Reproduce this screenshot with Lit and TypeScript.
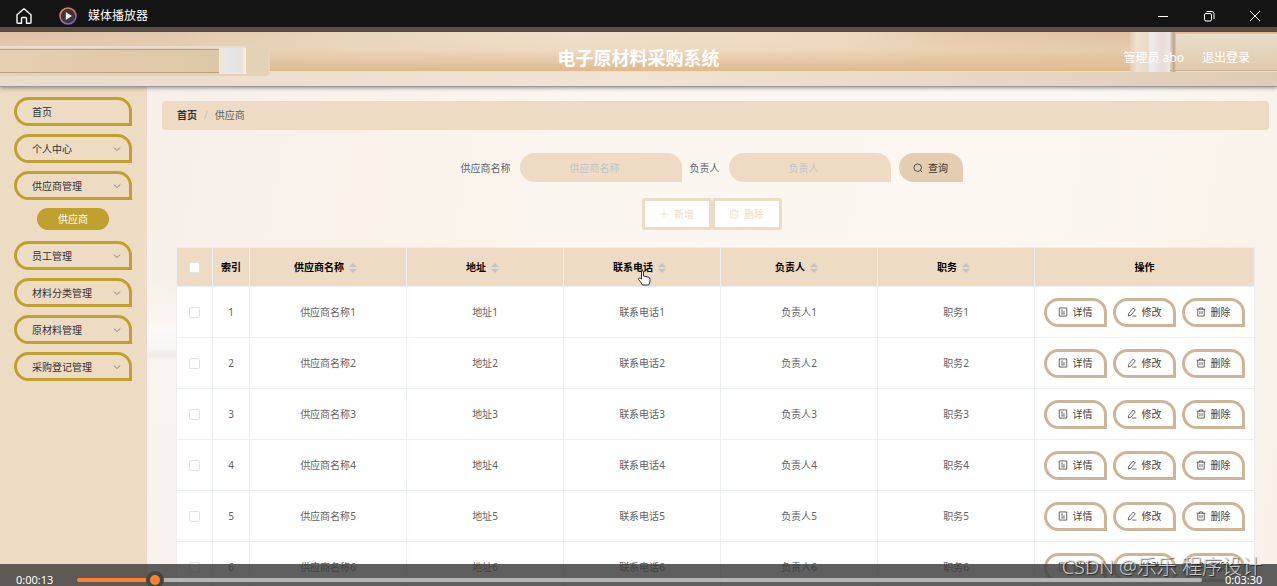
import { LitElement, html, css, svg } from "lit";
import { customElement, state } from "lit/decorators.js";

const glyph = (body: unknown, cls = "ic") =>
  html`<svg class=${cls} viewBox="0 0 16 16" fill="none" stroke="currentColor" aria-hidden="true">${body}</svg>`;

const icons = {
  chevron: svg`<path d="M1.500 5l6.500 6 6.500-6"/>`,
  search: svg`<circle cx="7.5" cy="7.5" r="6"/><path d="M12 12l2.6 2.6"/>`,
  plus: svg`<path d="M8 1v14M1 8h14"/>`,
  trash: svg`<path d="M1 3.5h14M5.5 3.5v-2h5v2M2.8 3.5v11h10.4v-11M6.3 6.5v5M9.7 6.5v5"/>`,
  detail: svg`<path d="M2 1.5h12v13H2zM5 5h3M5 8h6M5 11h6"/>`,
  edit: svg`<path d="M2.5 10.5L9.7 1.8l3.6 2.6-7.2 8.8-4 1.2zM8.5 14.5h6.5"/>`,
};

@customElement("page-banner")
class PageBanner extends LitElement {
  static styles = css`
    :host {
      display: grid;
      align-items: center;
      grid-template-columns: 1fr auto 1fr;
      position: relative;
      height: 54px;
      color: #fff;
      border-bottom: 1px solid #999;
      box-shadow: 0 1px 4px rgba(0, 0, 0, 0.4);
      z-index: 1;
    }
    .art {
      position: absolute;
      inset: 0;
      width: 100%;
      height: 100%;
    }
    .title {
      grid-column: 2;
      position: relative;
      margin: 0;
      padding-bottom: 3px;
      font-size: 18px;
      line-height: 24px;
      font-weight: 700;
    }
    .user {
      position: relative;
      justify-self: end;
      display: flex;
      gap: 18px;
      padding: 0 27px 2px 0;
      font-size: 12px;
      line-height: 20px;
    }
    .user a {
      color: inherit;
      text-decoration: none;
    }
  `;
  render() {
    return html`
      <svg class="art" viewBox="0 0 1277 54" preserveAspectRatio="none" aria-hidden="true">
        <defs>
          <linearGradient id="wood" x1="0" x2="1" y1="0" y2="0">
            <stop offset="0" stop-color="#dfc0a2" />
            <stop offset=".13" stop-color="#e2c8ac" />
            <stop offset=".27" stop-color="#e8d6b9" />
            <stop offset=".45" stop-color="#f1dfcd" />
            <stop offset=".66" stop-color="#ecdabc" />
            <stop offset=".76" stop-color="#e6c9ac" />
            <stop offset="1" stop-color="#d9b895" />
          </linearGradient>
          <linearGradient id="glow" x1="0" x2="0" y1="0" y2="1">
            <stop offset="0" stop-color="#eed9bd" stop-opacity="0" />
            <stop offset=".45" stop-color="#ecd5b8" stop-opacity=".5" />
            <stop offset=".65" stop-color="#e6c6a4" stop-opacity=".7" />
            <stop offset=".85" stop-color="#e2bf96" stop-opacity=".9" />
            <stop offset="1" stop-color="#dfbb8a" />
          </linearGradient>
          <linearGradient id="edge" x1="0" x2="1" y1="0" y2="0">
            <stop offset="0" stop-color="#e9dccb" />
            <stop offset=".5" stop-color="#f1e4d4" />
            <stop offset="1" stop-color="#dfccb4" />
          </linearGradient>
          <linearGradient id="bar" x1="0" x2="1" y1="0" y2="0">
            <stop offset="0" stop-color="#e7cfb3" />
            <stop offset=".5" stop-color="#e2c9ab" />
            <stop offset="1" stop-color="#dcc8a6" />
          </linearGradient>
          <linearGradient id="metal" x1="0" x2="1" y1="0" y2="0">
            <stop offset="0" stop-color="#f0e6da" />
            <stop offset=".4" stop-color="#e7e6e6" />
            <stop offset=".85" stop-color="#e9e3dd" />
            <stop offset="1" stop-color="#faf4ea" />
          </linearGradient>
          <linearGradient id="clasp" x1="0" x2="1" y1="0" y2="0">
            <stop offset="0" stop-color="#e4cdb2" />
            <stop offset=".15" stop-color="#eee2d2" />
            <stop offset=".38" stop-color="#e8dac6" />
            <stop offset=".45" stop-color="#efecec" />
            <stop offset=".7" stop-color="#e6dbda" />
            <stop offset=".85" stop-color="#efe8e4" />
            <stop offset=".95" stop-color="#b9a78c" />
            <stop offset="1" stop-color="#dccbb0" />
          </linearGradient>
          <linearGradient id="panel" x1="0" x2="0" y1="0" y2="1">
            <stop offset="0" stop-color="#e9dfcd" />
            <stop offset="1" stop-color="#e0c9a9" />
          </linearGradient>
        </defs>
        <rect width="1277" height="54" fill="url(#wood)" />
        <rect width="1277" height="39" fill="url(#glow)" />
        <rect y="39" width="1277" height="15" fill="url(#edge)" />
        <rect y="39" width="1277" height="1" fill="#f4dcc0" />
        <rect y="14" width="270" height="29" fill="#e6d3bb" />
        <rect y="14" width="245" height="2" fill="#ecdccb" />
        <rect y="17" width="219" height="24" fill="url(#bar)" />
        <path d="M0 17.500H219M0 40.500H219" stroke="#b9a184" />
        <rect x="219" y="16" width="27" height="26" fill="url(#metal)" />
        <rect x="246" y="15" width="22" height="25" fill="#e3d3b4" />
        <rect y="42" width="268" height="2" fill="#e7d2b5" />
        <rect x="1130" width="46" height="40" fill="url(#clasp)" />
        <rect x="1176" y="1" width="101" height="38" fill="url(#panel)" />
        <path d="M1170 38.500H1277" stroke="#c4b193" />
        <path d="M1176 1.500H1277" stroke="#d6c6ab" />
      </svg>
      <h1 class="title">电子原材料采购系统</h1>
      <div class="user"><span>管理员 abo</span><a href="#logout">退出登录</a></div>
    `;
  }
}

@customElement("side-menu")
class SideMenu extends LitElement {
  static styles = css`
    :host {
      display: block;
      width: 147px;
      box-sizing: border-box;
      padding: 10px 15px 0 14px;
      background: #eddcc3;
    }
    nav {
      display: flex;
      flex-direction: column;
      gap: 8px;
    }
    .item {
      display: flex;
      justify-content: space-between;
      align-items: center;
      box-sizing: border-box;
      height: 29px;
      padding: 0 8px 0 15px;
      border: 3px solid #c0a02f;
      border-radius: 15px 15px 0 15px;
      color: #303133;
      font-size: 10px;
      line-height: 16px;
      text-decoration: none;
    }
    .arrow {
      width: 8px;
      height: 8px;
      color: #8d8470;
      stroke-width: 2;
    }
    .sub {
      align-self: center;
      width: 72px;
      margin-bottom: 3px;
      border-radius: 11px;
      background: #c0a02f;
      color: #fff;
      text-align: center;
      text-decoration: none;
      font-size: 10px;
      line-height: 22px;
    }
  `;
  private items = ["首页", "个人中心", "供应商管理", "员工管理", "材料分类管理", "原材料管理", "采购登记管理"];
  render() {
    return html`<nav>
      ${this.items.map(
        (name, i) => html`
          <a class="item" href="#menu-${i}">${name}${i ? glyph(icons.chevron, "arrow") : null}</a>
          ${name === "供应商管理" ? html`<a class="sub" href="#supplier">供应商</a>` : null}
        `
      )}
    </nav>`;
  }
}

@customElement("supplier-page")
class SupplierPage extends LitElement {
  static styles = css`
    :host {
      display: block;
      min-width: 0;
      padding: 14px 8px 0 15px;
      font-size: 10px;
      line-height: 16px;
      color: #606266;
      background: linear-gradient(
          180deg,
          rgba(250, 247, 242, 0) 38%,
          rgba(250, 247, 242, 0.8) 46%,
          #fcfaf8 48%,
          #f7f5f2 52%,
          #eeeae3 53%,
          #f8f4ef 54%,
          rgba(248, 244, 239, 0.6) 100%
        )
        left / 60px 100% no-repeat,
        linear-gradient(100deg, #f7f0ea 0, #f9f1ea 18%, #fbf7f0 40%, #fcf8f1 75%, #f8f0e9 100%);
    }
    button,
    input {
      font: inherit;
      box-sizing: border-box;
      margin: 0;
    }
    button {
      display: flex;
      align-items: center;
      justify-content: center;
      gap: 5px;
      padding: 0;
      white-space: nowrap;
    }
    .ic {
      width: 10px;
      height: 10px;
      stroke-width: 1.3;
    }
    .crumbs {
      display: flex;
      gap: 7px;
      padding: 6px 15px 7px;
      border-radius: 4px;
      background: #eddcc3;
    }
    .crumbs a {
      color: #303133;
      font-weight: 700;
      text-decoration: none;
    }
    .slash {
      color: #c0c4cc;
    }
    .search {
      display: flex;
      justify-content: center;
      align-items: center;
      gap: 8px;
      padding: 23px 8px 16px 0;
    }
    .field {
      display: flex;
      align-items: center;
      gap: 9px;
    }
    .field input {
      width: 162px;
      height: 29px;
      padding: 0 12px 0 0;
      border: 0;
      border-radius: 15px 15px 0 15px;
      background: #eddcc3;
      text-align: center;
    }
    .field input::placeholder {
      color: #c0c4cc;
      opacity: 1;
    }
    .query {
      width: 64px;
      height: 29px;
      border: 0;
      border-radius: 15px 15px 0 15px;
      background: #e3ceb2;
      color: #303133;
    }
    .tools {
      display: flex;
      justify-content: center;
      padding: 0 8px 17px 0;
    }
    .tools button {
      width: 70px;
      height: 32px;
      border: 3px solid #eddcc3;
      border-radius: 3px;
      background: #fff;
      color: #eddcc3;
    }
    .wrap {
      padding: 0 14px;
    }
    table {
      width: 100%;
      table-layout: fixed;
      border-collapse: collapse;
      background: #fff;
    }
    .c-check {
      width: 36px;
    }
    .c-index {
      width: 37px;
    }
    .c-ops {
      width: 220px;
    }
    th,
    td {
      padding: 0;
      border: 1px solid #ebeef5;
      text-align: center;
      vertical-align: middle;
      font-weight: 400;
    }
    th {
      height: 38px;
      background: #eddcc3;
      color: #000;
      font-weight: 700;
    }
    td {
      height: 50px;
    }
    .sort {
      display: inline-flex;
      justify-content: center;
      width: 18px;
      vertical-align: middle;
    }
    .sort svg {
      width: 8px;
      height: 10px;
      fill: #c0c4cc;
    }
    .box {
      appearance: none;
      display: block;
      width: 11px;
      height: 11px;
      margin: 0 auto;
      border: 1px solid #dfe2e8;
      border-radius: 2px;
      background: #fff;
    }
    .ops {
      display: flex;
      justify-content: center;
      gap: 6px;
      padding-right: 1px;
    }
    .ops button {
      width: 63px;
      height: 29px;
      border: 3px solid #ccb697;
      border-radius: 15px 15px 0 15px;
      background: #fff;
      color: #444;
    }
  `;
  private columns = ["供应商名称", "地址", "联系电话", "负责人", "职务"];
  private rows = [1, 2, 3, 4, 5, 6];
  render() {
    return html`
      <div class="crumbs">
        <a href="#home">首页</a><span class="slash">/</span><span>供应商</span>
      </div>
      <form class="search">
        <div class="field">
          <label for="name">供应商名称</label><input id="name" type="text" placeholder="供应商名称" />
        </div>
        <div class="field">
          <label for="owner">负责人</label><input id="owner" type="text" placeholder="负责人" />
        </div>
        <button class="query" type="button">${glyph(icons.search)}查询</button>
      </form>
      <div class="tools">
        <button type="button">${glyph(icons.plus)}新增</button>
        <button type="button">${glyph(icons.trash)}删除</button>
      </div>
      <div class="wrap">
        <table>
          <colgroup>
            <col class="c-check" />
            <col class="c-index" />
            ${this.columns.map(() => html`<col />`)}
            <col class="c-ops" />
          </colgroup>
          <thead>
            <tr>
              <th><input class="box" type="checkbox" aria-label="全选" /></th>
              <th>索引</th>
              ${this.columns.map(
                (c) => html`<th>
                  ${c}<span class="sort"
                    ><svg viewBox="0 0 8 10" aria-hidden="true"><path d="M4 0l4 4H0zM4 10l4-4H0z" /></svg
                  ></span>
                </th>`
              )}
              <th>操作</th>
            </tr>
          </thead>
          <tbody>
            ${this.rows.map(
              (n) => html`<tr>
                <td><input class="box" type="checkbox" aria-label="选择第${n}行" /></td>
                <td>${n}</td>
                ${this.columns.map((c) => html`<td>${c}${n}</td>`)}
                <td>
                  <div class="ops">
                    <button type="button">${glyph(icons.detail)}详情</button>
                    <button type="button">${glyph(icons.edit)}修改</button>
                    <button type="button">${glyph(icons.trash)}删除</button>
                  </div>
                </td>
              </tr>`
            )}
          </tbody>
        </table>
      </div>
    `;
  }
}

@customElement("app-root")
class AppRoot extends LitElement {
  static styles = css`
    :host {
      display: flex;
      flex-direction: column;
      position: relative;
      height: 100vh;
      overflow: hidden;
      font-family: "Noto Sans", "Noto Sans CJK SC", sans-serif;
    }
    .titlebar {
      display: flex;
      align-items: center;
      flex: none;
      height: 32px;
      box-sizing: border-box;
      padding: 4px 0 0 15px;
      background: #141414;
      border-bottom: 5px solid #5a5048;
      color: #fff;
      font-size: 12px;
      line-height: 18px;
    }
    .titlebar button {
      display: flex;
      align-items: center;
      justify-content: center;
      padding: 0;
      border: 0;
      background: none;
      color: inherit;
    }
    .home svg {
      width: 18px;
      height: 18px;
    }
    .logo {
      width: 18px;
      height: 18px;
      margin: 0 11px 0 26px;
    }
    .controls {
      display: flex;
      gap: 2px;
      margin-left: auto;
    }
    .controls button {
      width: 44px;
      height: 22px;
    }
    .controls svg {
      width: 12px;
      height: 12px;
    }
    page-banner {
      flex: none;
    }
    .body {
      display: grid;
      grid-template-columns: auto 1fr;
      flex: 1;
      min-height: 0;
    }
    .pointer {
      position: absolute;
      left: 637px;
      top: 270px;
      width: 14px;
      height: 16px;
      z-index: 2;
    }
    .player {
      position: absolute;
      left: 0;
      right: 0;
      bottom: 0;
      display: flex;
      align-items: center;
      gap: 23px;
      box-sizing: border-box;
      height: 22px;
      padding: 10px 14px 0 16px;
      background: rgba(60, 60, 60, 0.82);
      color: #fff;
      font-size: 11px;
      line-height: 12px;
      z-index: 3;
    }
    .time {
      width: 38px;
      white-space: nowrap;
    }
    .seek {
      appearance: none;
      flex: 1;
      min-width: 0;
      height: 4px;
      margin: 0;
      border-radius: 2px;
      background: linear-gradient(90deg, #ff8130 7%, #b4b4b4 7%);
    }
    .seek::-webkit-slider-thumb {
      appearance: none;
      width: 18px;
      height: 18px;
      border: 4px solid #454545;
      border-radius: 50%;
      background: #ff8130;
    }
    .mark {
      position: absolute;
      right: 15px;
      bottom: 5px;
      font-size: 20px;
      line-height: 28px;
      font-weight: 300;
      color: rgba(225, 225, 225, 0.85);
      text-shadow: 1px 1px 1px rgba(0, 0, 0, 0.6);
      z-index: 4;
      pointer-events: none;
    }
  `;
  @state() private position = 13;
  render() {
    return html`
      <header class="titlebar">
        <button class="home" aria-label="主页">
          <svg viewBox="0 0 18 18" fill="none" stroke="currentColor" stroke-width="1.4" stroke-linejoin="round">
            <path d="M2 7.800L9 1.800l7 6v7.400q0 1-1 1h-3.500V11.500q0-1-1-1h-3q-1 0-1 1v4.700H3q-1 0-1-1z" />
          </svg>
        </button>
        <svg class="logo" viewBox="0 0 18 18" aria-hidden="true">
          <defs>
            <linearGradient id="ring" x1="0" y1="0" x2=".5" y2="1">
              <stop offset="0" stop-color="#ff8a3c" />
              <stop offset="1" stop-color="#8a5cc0" />
            </linearGradient>
          </defs>
          <circle cx="9" cy="9" r="8" fill="#383838" stroke="url(#ring)" stroke-width="1.600" />
          <path d="M6.800 5v8l6-4z" fill="#fff" />
        </svg>
        <span>媒体播放器</span>
        <div class="controls">
          <button aria-label="最小化">
            <svg viewBox="0 0 12 12" stroke="currentColor"><path d="M1 6.500h10" /></svg>
          </button>
          <button aria-label="还原">
            <svg viewBox="0 0 12 12" fill="none" stroke="currentColor">
              <rect x="1.500" y="3.500" width="7" height="7.500" rx="1.500" />
              <path d="M3.500 1.500H9q2 0 2 2V9" />
            </svg>
          </button>
          <button aria-label="关闭">
            <svg viewBox="0 0 12 12" stroke="currentColor"><path d="M1 1l10 10M11 1L1 11" /></svg>
          </button>
        </div>
      </header>
      <page-banner></page-banner>
      <div class="body">
        <side-menu></side-menu>
        <supplier-page></supplier-page>
      </div>
      <svg class="pointer" viewBox="0 0 14 16" aria-hidden="true">
        <path
          d="M4.500 9V2q0-1.200 1-1.200t1 1.200v4l5 1.200q1.500.5 1.500 2V11q0 2-1.500 4H5.500Q4 12 1.500 9.500q-.5-1.300.8-1.500 1 0 2.200 1z"
          fill="#fff"
          stroke="#333"
        />
      </svg>
      <div class="player">
        <span class="time">0:00:13</span>
        <input class="seek" type="range" min="0" max="210" .value=${String(this.position)} aria-label="播放进度" />
        <span class="time">0:03:30</span>
      </div>
      <div class="mark">CSDN @乐乐 程序设计</div>
    `;
  }
}
